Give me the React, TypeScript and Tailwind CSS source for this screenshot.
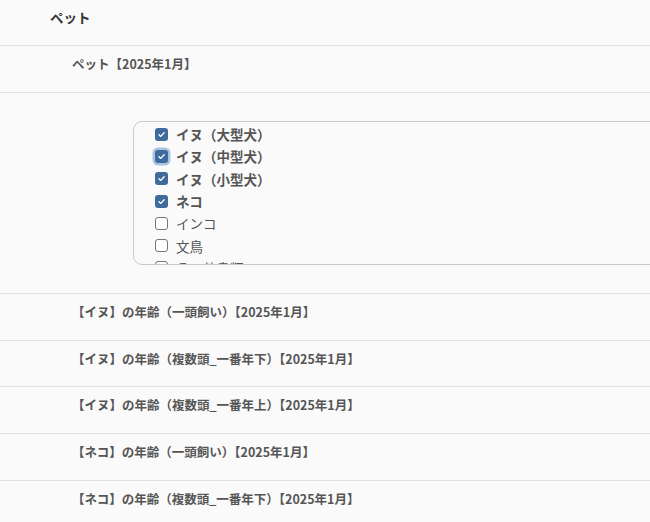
import React from "react";

const font = { fontFamily: '"Noto Sans CJK JP", "Noto Sans", sans-serif' };

const pets: { label: string; checked: boolean; focus?: boolean }[] = [
  { label: "イヌ（大型犬）", checked: true },
  { label: "イヌ（中型犬）", checked: true, focus: true },
  { label: "イヌ（小型犬）", checked: true },
  { label: "ネコ", checked: true },
  { label: "インコ", checked: false },
  { label: "文鳥", checked: false },
  { label: "その他鳥類", checked: false },
];

const rows = [
  "【イヌ】の年齢（一頭飼い）【2025年1月】",
  "【イヌ】の年齢（複数頭_一番年下）【2025年1月】",
  "【イヌ】の年齢（複数頭_一番年上）【2025年1月】",
  "【ネコ】の年齢（一頭飼い）【2025年1月】",
  "【ネコ】の年齢（複数頭_一番年下）【2025年1月】",
];

function Box({ checked, focus }: { checked: boolean; focus?: boolean }) {
  return (
    <span
      className={
        "flex h-[13px] w-[13px] shrink-0 items-center justify-center rounded-[3px] " +
        (checked ? "bg-[#3e6b9c] " : "border border-[#767676] bg-white ") +
        (focus ? "ring-[2.5px] ring-[#a9c3e0]" : "")
      }
    >
      {checked && (
        <svg width="9" height="9" viewBox="0 0 10 10" fill="none">
          <path d="M2.2 5.2 L4.2 7.1 L7.9 3.1" stroke="white" strokeWidth="1.5" strokeLinecap="round" strokeLinejoin="round" />
        </svg>
      )}
    </span>
  );
}

export default function App() {
  return (
    <div className="h-[522px] w-[650px] overflow-hidden bg-[#fafafa]" style={font}>
      <div className="h-[46px] border-b border-[#e2e2e2] pl-[50px] pt-[7px] text-[13.5px] font-bold leading-[20px] text-[#333]">
        ペット
      </div>
      <div className="h-[47px] border-b border-[#e2e2e2] pl-[72px] pt-[9px] text-[12.5px] font-bold leading-[18px] text-[#555]">
        ペット【2025年1月】
      </div>
      <div className="h-[201px] border-b border-[#e2e2e2] pl-[133px] pt-[28px]">
        <div className="h-[144px] w-[560px] overflow-hidden rounded-[9px] border border-[#c9c9c9] pl-[21px] pt-[1px]">
          {pets.map((p) => (
            <div key={p.label} className="flex h-[22.3px] items-center gap-[8px]">
              <Box checked={p.checked} focus={p.focus} />
              <span
                className={
                  "text-[13.5px] leading-[18px] text-[#555] " + (p.checked ? "font-bold" : "font-normal")
                }
              >
                {p.label}
              </span>
            </div>
          ))}
        </div>
      </div>
      {rows.map((r) => (
        <div
          key={r}
          className="h-[46.7px] border-b border-[#e2e2e2] pl-[72px] pt-[9px] text-[12.5px] font-bold leading-[18px] text-[#555]"
        >
          {r}
        </div>
      ))}
    </div>
  );
}
